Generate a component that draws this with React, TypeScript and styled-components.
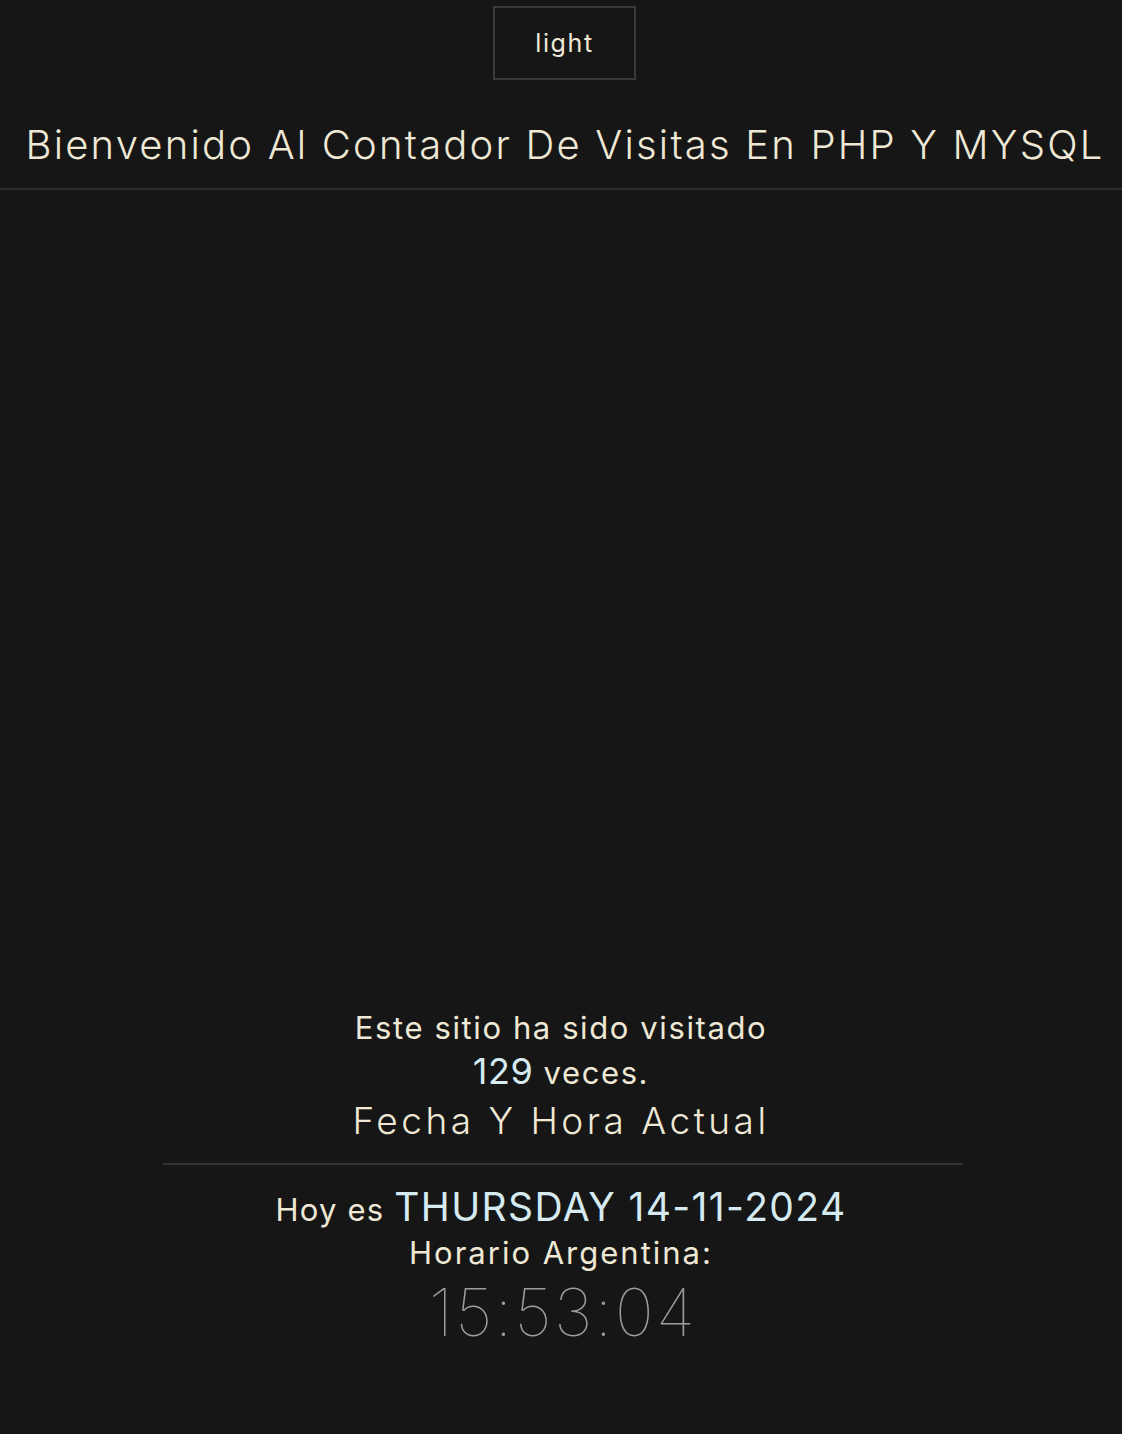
import React from "react";
import styled, { createGlobalStyle } from "styled-components";

const Global = createGlobalStyle`
  html, body { margin: 0; padding: 0; background: #161616; }
  body { font-family: Inter, "Open Sans", sans-serif; color: #eee8d5; }
`;

const Page = styled.div`
  min-height: 1434px;
  display: flex;
  flex-direction: column;
  box-sizing: border-box;
`;

const Header = styled.header`
  display: flex;
  flex-direction: column;
  align-items: center;
  border-bottom: 2px solid #2c2c2c;
`;

const ThemeButton = styled.button`
  margin: 6px 0 0 7px;
  width: 143px;
  height: 74px;
  background: transparent;
  border: 2px solid #3a3a3a;
  color: #eee8d5;
  font-family: Inter, sans-serif;
  font-size: 25px;
  font-weight: 400;
  letter-spacing: 1.6px;
  cursor: pointer;
`;

const Title = styled.h1`
  margin: 41px 0 19px 8px;
  font-size: 40px;
  line-height: 48px;
  font-weight: 300;
  letter-spacing: 2.2px;
  text-align: center;
  white-space: nowrap;
`;

const Main = styled.main`
  flex: 1;
`;

const Footer = styled.footer`
  display: flex;
  flex-direction: column;
  align-items: center;
  padding-bottom: 83px;
`;

const Line = styled.p<{ $size: number; $lh: number; $spacing?: number; $weight?: number }>`
  margin: 0;
  font-size: ${(p) => p.$size}px;
  line-height: ${(p) => p.$lh}px;
  font-weight: ${(p) => p.$weight ?? 400};
  letter-spacing: ${(p) => p.$spacing ?? 0}px;
  text-align: center;
  white-space: nowrap;
`;

const Accent = styled.span<{ $size: number; $spacing?: number }>`
  color: #d5ebf1;
  font-size: ${(p) => p.$size}px;
  letter-spacing: ${(p) => p.$spacing ?? 0}px;
  line-height: 1;
`;

const Divider = styled.hr`
  width: 800px;
  border: none;
  border-top: 2px solid #333;
  margin: 17px 0 22px 4px;
`;

const Clock = styled.div`
  margin-left: 4px;
  font-size: 66px;
  line-height: 78px;
  font-weight: 100;
  letter-spacing: 2.2px;
  color: #9e9e9e;
`;

export default function App() {
  return (
    <>
      <Global />
      <Page>
        <Header>
          <ThemeButton>light</ThemeButton>
          <Title>Bienvenido Al Contador De Visitas En PHP Y MYSQL</Title>
        </Header>
        <Main />
        <Footer>
          <Line $size={31} $lh={45} $spacing={1.6}>Este sitio ha sido visitado</Line>
          <Line $size={31} $lh={45} $spacing={1.6}>
            <Accent $size={36} $spacing={0.5}>129</Accent> veces.
          </Line>
          <Line $size={37} $lh={51} $spacing={3.5} $weight={300}>Fecha Y Hora Actual</Line>
          <Divider />
          <Line $size={31} $lh={46} $spacing={1.2}>
            Hoy es <Accent $size={39} $spacing={1.4}>THURSDAY 14-11-2024</Accent>
          </Line>
          <Line $size={31} $lh={40} $spacing={2}>Horario Argentina:</Line>
          <Clock>15:53:04</Clock>
        </Footer>
      </Page>
    </>
  );
}
